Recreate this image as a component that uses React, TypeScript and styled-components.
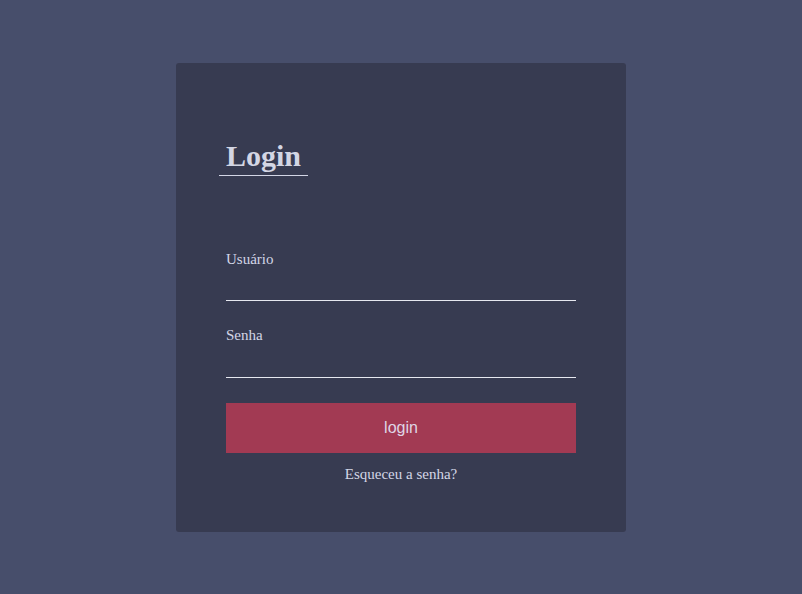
import React from "react";
import styled, { createGlobalStyle } from "styled-components";

const Global = createGlobalStyle`
  html, body { margin: 0; padding: 0; }
  body {
    background: #474e6b;
    font-family: "Liberation Serif", "Times New Roman", serif;
    color: #d3d6e6;
  }
  * { box-sizing: border-box; }
`;

const Page = styled.div`
  min-height: 100vh;
  display: flex;
  align-items: center;
  justify-content: center;
`;

const Card = styled.form`
  width: 450px;
  background: #373b51;
  border-radius: 3px;
  padding: 77px 50px 49px;
  display: flex;
  flex-direction: column;
  & > * { flex-shrink: 0; }
`;

const Title = styled.h1`
  align-self: flex-start;
  margin: 0 0 75px -7px;
  padding: 0 7px 4px;
  font-size: 30px;
  line-height: 31px;
  font-weight: bold;
  color: #d3d6e4;
  border-bottom: 1px solid #d3d6e6;
`;

const Field = styled.label<{ $gap: number }>`
  display: flex;
  flex-direction: column;
  margin-bottom: ${(p) => p.$gap}px;
`;

const LabelText = styled.span`
  font-size: 15px;
  line-height: 17px;
`;

const Input = styled.input<{ $offset: number }>`
  margin-top: ${(p) => p.$offset}px;
  height: 32px;
  background: transparent;
  border: none;
  border-bottom: 1px solid #e6e8f0;
  outline: none;
  color: #d3d6e6;
  font-size: 15px;
  font-family: inherit;
  padding: 0;
`;

const Button = styled.button`
  height: 50px;
  background: #a23a53;
  border: none;
  color: #dfd6e6;
  font-family: "Liberation Sans", Arial, sans-serif;
  font-size: 16px;
  cursor: pointer;
`;

const Forgot = styled.a`
  margin-top: 13px;
  text-align: center;
  font-size: 15px;
  line-height: 17px;
  color: #d3d6e6;
  text-decoration: none;
`;

export default function App() {
  return (
    <>
      <Global />
      <Page>
        <Card onSubmit={(e) => e.preventDefault()}>
          <Title>Login</Title>
          <Field $gap={26}>
            <LabelText>Usuário</LabelText>
            <Input type="text" $offset={1} />
          </Field>
          <Field $gap={25}>
            <LabelText>Senha</LabelText>
            <Input type="password" $offset={2} />
          </Field>
          <Button type="submit">login</Button>
          <Forgot href="#">Esqueceu a senha?</Forgot>
        </Card>
      </Page>
    </>
  );
}
